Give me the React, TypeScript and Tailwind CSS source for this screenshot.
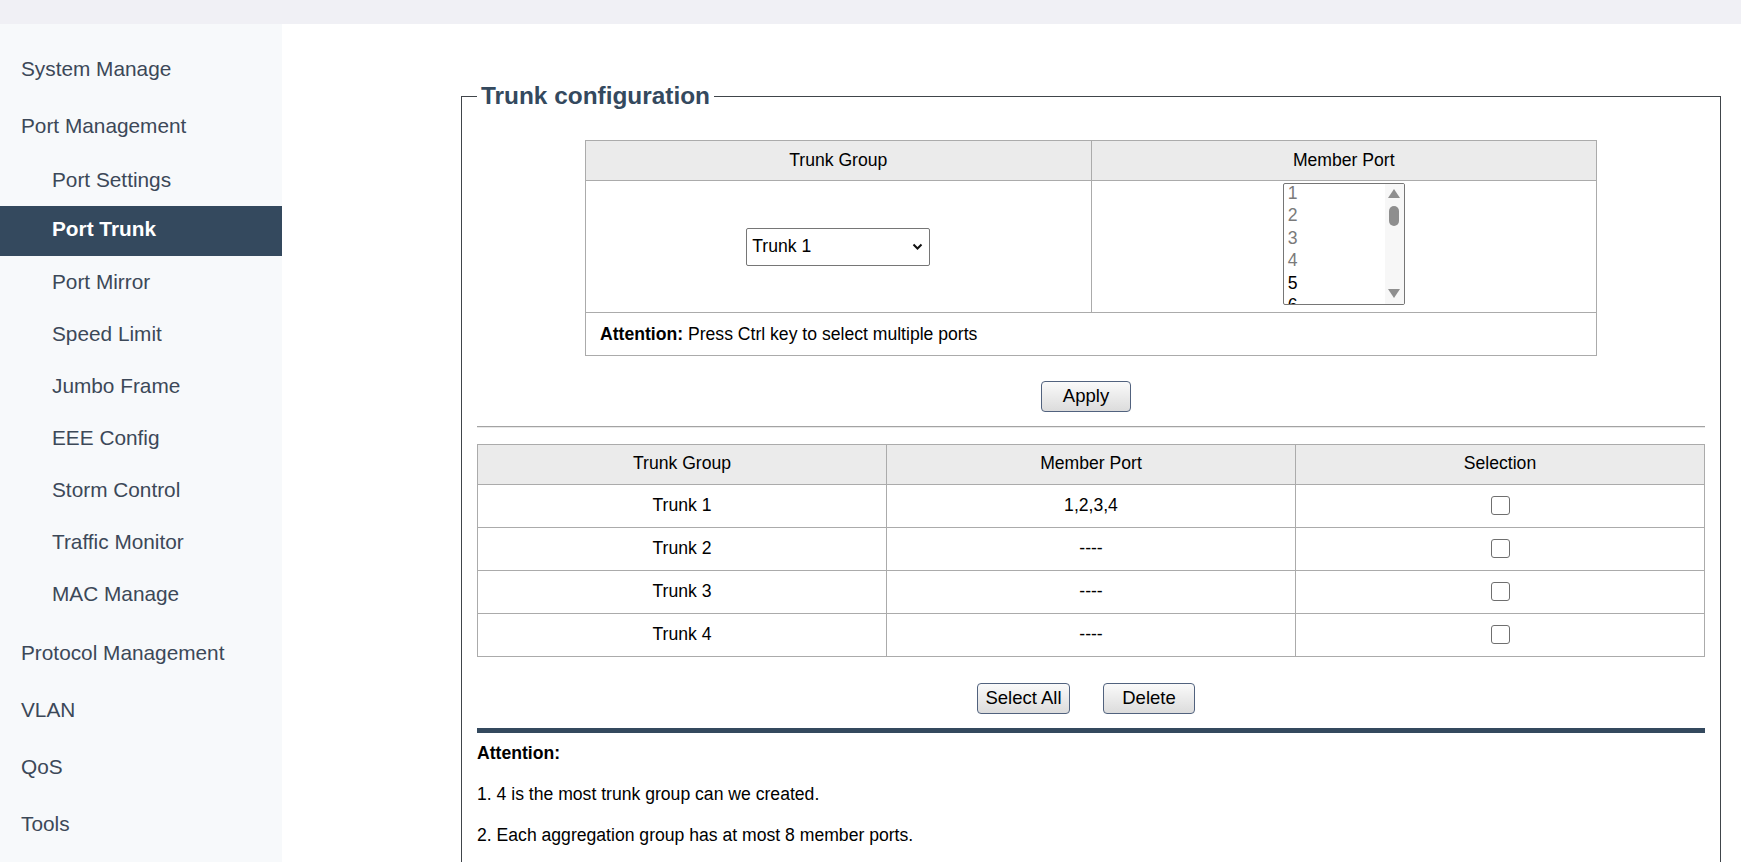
import React from "react";

const subItems = ["Port Mirror", "Speed Limit", "Jumbo Frame", "EEE Config", "Storm Control", "Traffic Monitor", "MAC Manage"];
const bottomItems = ["Protocol Management", "VLAN", "QoS", "Tools"];
const rows = [
  { g: "Trunk 1", p: "1,2,3,4" },
  { g: "Trunk 2", p: "----" },
  { g: "Trunk 3", p: "----" },
  { g: "Trunk 4", p: "----" },
];

function ListBox() {
  const items = ["1", "2", "3", "4", "5", "6"];
  return (
    <div className="flex h-[122px] w-[122px] overflow-hidden rounded-[2px] border border-[#767676] bg-white">
      <div className="-mt-[2px] flex-1 pl-[4px] text-left text-[17.6px] leading-[22.5px]">
        {items.map((it, i) => (
          <div key={it} className={i < 4 ? "text-[#7a7a7a]" : "text-black"}>
            {it}
          </div>
        ))}
      </div>
      <div className="flex w-[19px] flex-col items-center bg-[#f7f7f7]">
        <svg className="mt-[5px]" width="12" height="9" viewBox="0 0 12 9">
          <path d="M6 0 L12 9 L0 9 Z" fill="#8f8f8f" />
        </svg>
        <div className="mt-[8px] h-[20px] w-[10px] rounded-full bg-[#8e8e8e]" />
        <div className="flex-1" />
        <svg className="mb-[6px]" width="12" height="9" viewBox="0 0 12 9">
          <path d="M0 0 L12 0 L6 9 Z" fill="#8f8f8f" />
        </svg>
      </div>
    </div>
  );
}

function Btn({ children, w }: { children: React.ReactNode; w: string }) {
  return (
    <button
      className={`${w} h-[31px] rounded-[4px] border border-[#51627e] bg-linear-to-b from-[#fafafa] to-[#dcdcdc] text-[18.5px] leading-none text-black`}
    >
      {children}
    </button>
  );
}

export default function App() {
  return (
    <div className="h-screen overflow-hidden bg-white font-['Liberation_Sans',Arial,sans-serif]">
      <div className="h-[24px] bg-[#f0f0f5]" />
      <div className="flex h-[calc(100%-24px)]">
        <aside className="w-[282px] shrink-0 bg-[#f7f9fb] pt-[16px] text-[20.8px] text-[#3c4858]">
          <div className="flex h-[57px] items-center pl-[21px]">System Manage</div>
          <div className="flex h-[57px] items-center pl-[21px]">Port Management</div>
          <div className="flex h-[52px] items-center pl-[52px]">Port Settings</div>
          <div className="flex h-[50px] items-center bg-[#34495e] pb-[5px] pl-[52px] font-bold text-white">Port Trunk</div>
          {subItems.map((s) => (
            <div key={s} className="flex h-[52px] items-center pl-[52px]">
              {s}
            </div>
          ))}
          <div className="pt-[4px]">
            {bottomItems.map((s) => (
              <div key={s} className="flex h-[57px] items-center pl-[21px]">
                {s}
              </div>
            ))}
          </div>
        </aside>
        <main className="min-w-0 flex-1">
          <fieldset className="mr-[20px] ml-[179px] mt-[58px] border border-[#40454a] px-[15px] pt-[30px] pb-[40px] text-[17.6px] text-black">
            <legend className="px-[4px] text-[24.4px] leading-[28px] font-bold text-[#34495e]">Trunk configuration</legend>

            <table className="mx-auto w-[1012px] border-collapse">
              <thead>
                <tr className="bg-[#ebebeb]">
                  <th className="h-[40px] w-1/2 border border-[#ababab] font-normal">Trunk Group</th>
                  <th className="h-[40px] w-1/2 border border-[#ababab] font-normal">Member Port</th>
                </tr>
              </thead>
              <tbody>
                <tr>
                  <td className="h-[132px] border border-[#ababab]">
                    <div className="flex justify-center">
                      <div className="relative h-[38px] w-[184px]">
                        <select className="h-full w-full appearance-none rounded-[2px] border border-[#767676] bg-white pl-[5px] text-[17.6px] text-black">
                          <option>Trunk 1</option>
                          <option>Trunk 2</option>
                          <option>Trunk 3</option>
                          <option>Trunk 4</option>
                        </select>
                        <svg
                          className="pointer-events-none absolute top-[15px] right-[7px]"
                          width="11"
                          height="8"
                          viewBox="0 0 11 8"
                        >
                          <path d="M1.5 1.5 L5.5 5.5 L9.5 1.5" fill="none" stroke="#111" strokeWidth="2" />
                        </svg>
                      </div>
                    </div>
                  </td>
                  <td className="h-[132px] border border-[#ababab]">
                    <div className="mb-[6px] flex justify-center">
                      <ListBox />
                    </div>
                  </td>
                </tr>
                <tr>
                  <td colSpan={2} className="h-[43px] border border-[#ababab] pl-[14px]">
                    <b>Attention:</b> Press Ctrl key to select multiple ports
                  </td>
                </tr>
              </tbody>
            </table>

            <div className="mt-[25px] flex justify-center">
              <div className="mr-[10px]">
                <Btn w="w-[90px]">Apply</Btn>
              </div>
            </div>

            <div className="mt-[14px] border-t border-b border-t-[#a3a3a3] border-b-[#e8e8e8]" />

            <table className="mt-[16px] w-full border-collapse">
              <thead>
                <tr className="bg-[#ebebeb]">
                  <th className="h-[40px] w-1/3 border border-[#ababab] pb-[2px] font-normal">Trunk Group</th>
                  <th className="h-[40px] w-1/3 border border-[#ababab] pb-[2px] font-normal">Member Port</th>
                  <th className="h-[40px] w-1/3 border border-[#ababab] pb-[2px] font-normal">Selection</th>
                </tr>
              </thead>
              <tbody>
                {rows.map((r) => (
                  <tr key={r.g}>
                    <td className="h-[43px] border border-[#ababab] pb-[2px] text-center">{r.g}</td>
                    <td className="h-[43px] border border-[#ababab] pb-[2px] text-center">{r.p}</td>
                    <td className="h-[43px] border border-[#ababab] pb-[3px] text-center">
                      <input
                        type="checkbox"
                        className="inline-block h-[19px] w-[19px] appearance-none rounded-[3px] border border-[#6f6f6f] bg-white align-middle"
                      />
                    </td>
                  </tr>
                ))}
              </tbody>
            </table>

            <div className="mt-[26px] flex justify-center">
              <div className="mr-[10px] flex gap-[33px]">
                <Btn w="w-[93px]">Select All</Btn>
                <Btn w="w-[92px]">Delete</Btn>
              </div>
            </div>

            <div className="mt-[14px] h-[5px] bg-[#34495e]" />

            <div className="mt-[10px] leading-[21px]">
              <p className="font-bold">Attention:</p>
              <p className="mt-[20px]">1. 4 is the most trunk group can we created.</p>
              <p className="mt-[20px]">2. Each aggregation group has at most 8 member ports.</p>
            </div>
          </fieldset>
        </main>
      </div>
    </div>
  );
}
